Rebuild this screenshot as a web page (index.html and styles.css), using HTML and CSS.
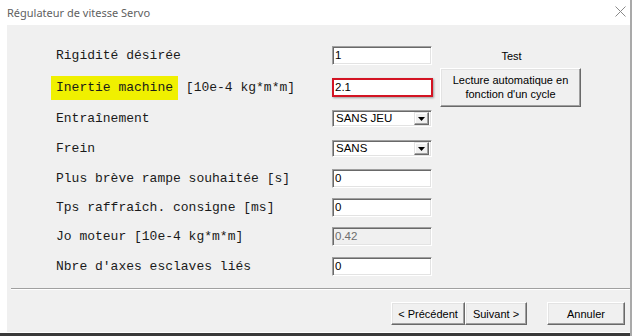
FILE: index.html
```html
<!DOCTYPE html>
<html>
<head>
<meta charset="utf-8">
<link rel="stylesheet" href="styles.css">
</head>
<body>
<div class="window">
  <div class="titlebar">
    <span class="title">Régulateur de vitesse Servo</span>
    <svg class="close" width="11" height="11" viewBox="0 0 11 11"><path d="M0.5 0.5 L10.5 10.5 M10.5 0.5 L0.5 10.5" stroke="#8a8a8a" stroke-width="1" fill="none"/></svg>
  </div>
  <div class="client">
    <div class="form">
      <div class="label">Rigidité désirée</div>
      <div class="field">1</div>
      <div class="test">Test</div>

      <div class="label"><span class="hl">Inertie machine</span> [10e-4 kg*m*m]</div>
      <div class="field field-alert">2.1</div>
      <div class="btn btn-read">Lecture automatique en<br>fonction d'un cycle</div>

      <div class="label">Entraînement</div>
      <div class="combo"><span class="combo-text">SANS JEU</span><span class="combo-btn"><svg width="7" height="4" viewBox="0 0 7 4"><path d="M0 0 H7 L3.5 4 Z" fill="#000"/></svg></span></div>

      <div class="label">Frein</div>
      <div class="combo"><span class="combo-text">SANS</span><span class="combo-btn"><svg width="7" height="4" viewBox="0 0 7 4"><path d="M0 0 H7 L3.5 4 Z" fill="#000"/></svg></span></div>

      <div class="label">Plus brève rampe souhaitée [s]</div>
      <div class="field">0</div>

      <div class="label">Tps raffraîch. consigne [ms]</div>
      <div class="field">0</div>

      <div class="label">Jo moteur [10e-4 kg*m*m]</div>
      <div class="field field-disabled">0.42</div>

      <div class="label">Nbre d'axes esclaves liés</div>
      <div class="field">0</div>
    </div>
    <div class="separator"></div>
    <div class="footer">
      <div class="btn btn-nav btn-prev">&lt; Précédent</div>
      <div class="btn btn-nav btn-next">Suivant &gt;</div>
      <div class="btn btn-nav btn-cancel">Annuler</div>
    </div>
  </div>
  <div class="bottom-edge"></div>
</div>
</body>
</html>
```
FILE: styles.css
```css
* { box-sizing: border-box; }
html, body {
  margin: 0;
  padding: 0;
  background: #ffffff;
  width: 635px;
  height: 336px;
  overflow: hidden;
}
.window {
  width: 632px;
  height: 336px;
  border-right: 2px solid #a9a9a9;
  background: #ffffff;
  display: flex;
  flex-direction: column;
}
.titlebar {
  height: 25px;
  flex: none;
  display: flex;
  align-items: center;
  justify-content: space-between;
  padding: 0 4px 1px 7px;
}
.title {
  font-family: "Noto Sans", "Open Sans", sans-serif;
  font-size: 11px;
  color: #5f5f5f;
}
.close { display: block; margin-top: -1px; }
.client {
  margin-left: 7px;
  width: 623px;
  height: 307px;
  flex: none;
  background: #f0f0f0;
  padding-top: 15px;
  display: flex;
  flex-direction: column;
}
.form {
  display: grid;
  grid-template-columns: 268px 100px 141px;
  grid-template-rows: 31px 32px 30px 30px 30px 29px 29px 30px;
  column-gap: 8px;
  padding-left: 49px;
  align-items: center;
}
.label {
  grid-column: 1;
  font-family: "Liberation Mono", "Courier New", monospace;
  font-size: 13px;
  color: #1a1a1a;
  white-space: nowrap;
}
.hl {
  background: #f0f000;
  padding: 4px 5px 5px 5px;
  margin-left: -5px;
}
.field {
  grid-column: 2;
  height: 19px;
  background: #ffffff;
  border-top: 1px solid #a0a0a0;
  border-left: 1px solid #a0a0a0;
  border-right: 1px solid #ffffff;
  border-bottom: 1px solid #ffffff;
  box-shadow: inset 1px 1px 0 #696969, inset -1px -1px 0 #e3e3e3;
  font-family: "Liberation Sans", Arial, sans-serif;
  font-size: 11.5px;
  line-height: 17px;
  padding-left: 2px;
  color: #000;
}
.field-alert {
  border: 2px solid #d31423;
  box-shadow: 1px 1px 2px rgba(0,0,0,0.35);
  line-height: 15px;
  padding-left: 1px;
  width: 101px;
}
.field-disabled {
  background: #f0f0f0;
  color: #6d6d6d;
}
.combo {
  grid-column: 2;
  height: 17px;
  display: flex;
  align-items: center;
  justify-content: space-between;
  background: #ffffff;
  border-top: 1px solid #a0a0a0;
  border-left: 1px solid #a0a0a0;
  border-right: 1px solid #ffffff;
  border-bottom: 1px solid #ffffff;
  box-shadow: inset 1px 1px 0 #696969, inset -1px -1px 0 #e3e3e3;
  padding: 2px 2px 2px 3px;
}
.combo-text {
  font-family: "Liberation Sans", Arial, sans-serif;
  font-size: 11.5px;
  line-height: 13px;
  color: #000;
}
.combo-btn {
  width: 15px;
  height: 13px;
  display: flex;
  align-items: center;
  justify-content: center;
  background: #f0f0f0;
  border-top: 1px solid #e3e3e3;
  border-left: 1px solid #e3e3e3;
  border-right: 1px solid #696969;
  border-bottom: 1px solid #696969;
  box-shadow: inset -1px -1px 0 #a0a0a0, inset 1px 1px 0 #ffffff;
}
.combo-btn svg { display: block; margin-top: 1px; }
.test {
  grid-column: 3;
  grid-row: 1;
  text-align: center;
  font-family: "Liberation Sans", Arial, sans-serif;
  font-size: 11px;
  color: #000;
  padding-left: 2px;
}
.btn {
  background: #f0f0f0;
  border-top: 1px solid #ffffff;
  border-left: 1px solid #ffffff;
  border-right: 1px solid #696969;
  border-bottom: 1px solid #696969;
  box-shadow: inset -1px -1px 0 #a0a0a0, inset 1px 1px 0 #e3e3e3;
  font-family: "Liberation Sans", Arial, sans-serif;
  font-size: 11px;
  color: #000;
  text-align: center;
  display: flex;
  align-items: center;
  justify-content: center;
}
.btn-read {
  grid-column: 3;
  grid-row: 2;
  height: 39px;
  line-height: 14px;
  padding-bottom: 1px;
}
.separator {
  margin: 7px 0 0 4px;
  height: 2px;
  border-top: 1px solid #a0a0a0;
  border-bottom: 1px solid #ffffff;
}
.footer {
  display: flex;
  justify-content: flex-end;
  margin-top: 12px;
  padding-right: 5px;
}
.btn-nav { height: 23px; }
.btn-prev { width: 74px; }
.btn-next { width: 62px; }
.btn-cancel { width: 78px; margin-left: 20px; }
.bottom-edge {
  margin-top: 1px;
  flex: 1;
  background: #3a3a3a;
}
```
